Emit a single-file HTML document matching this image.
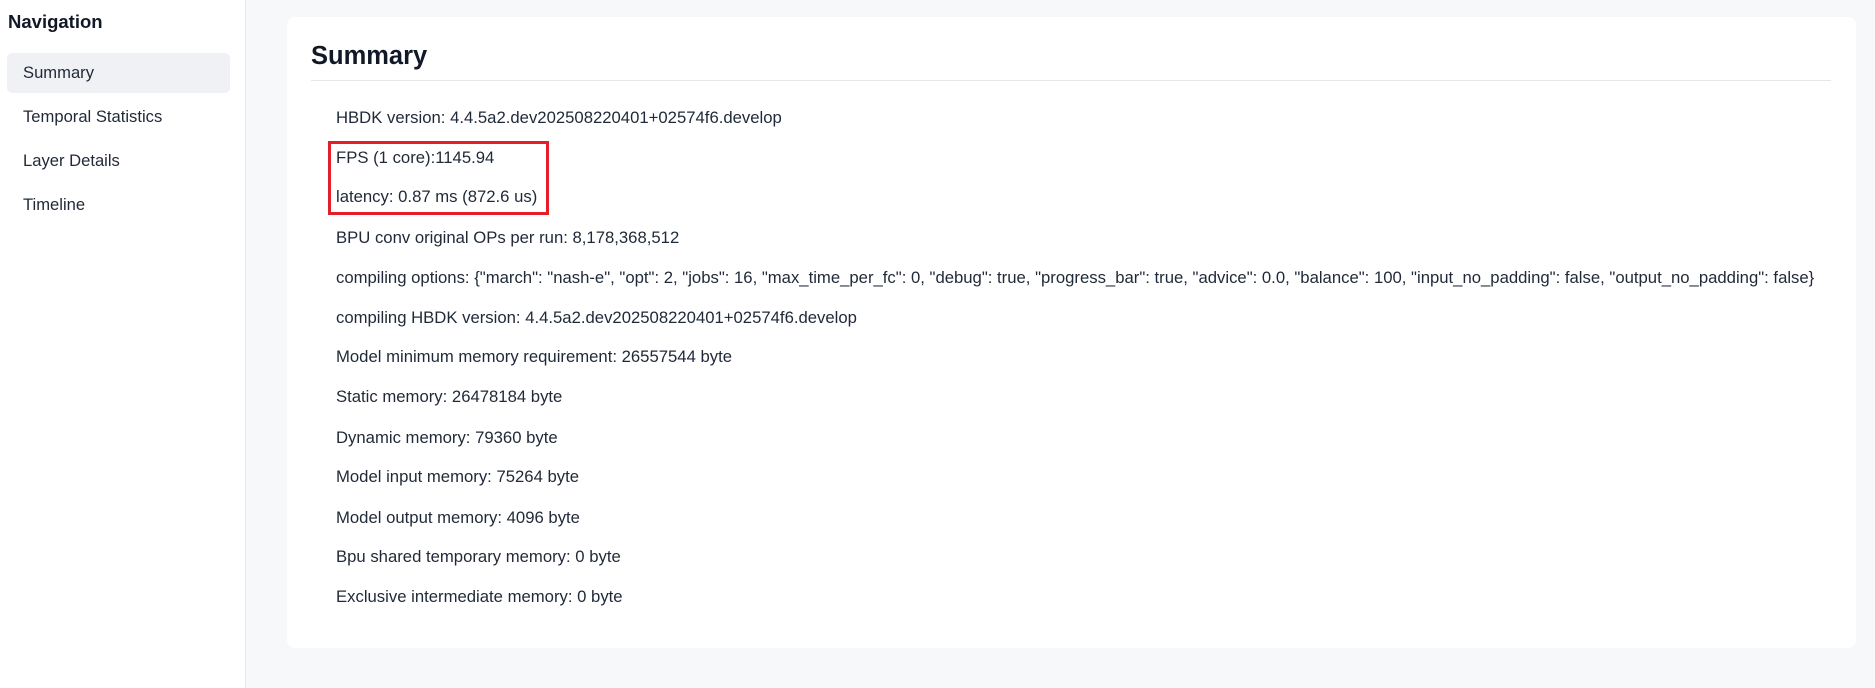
<!DOCTYPE html>
<html><head><meta charset="utf-8"><style>
*{margin:0;padding:0;box-sizing:border-box}
body{width:1875px;height:688px;background:#f7f8fa;font-family:"Liberation Sans",sans-serif;color:#1f2937;position:relative;overflow:hidden}
.side{position:absolute;left:0;top:0;width:246px;height:688px;background:#fff;border-right:1px solid #e5e7eb}
.side h3{position:absolute;left:8px;top:11px;font-size:18.5px;font-weight:bold;color:#111827}
.item{position:absolute;left:7px;width:223px;height:40px;line-height:40px;padding-left:16px;font-size:16.6px;color:#1f2937;border-radius:5px}
.item.act{background:#f0f1f4}
.card{position:absolute;left:287px;top:17px;width:1569px;height:631px;background:#fff;border-radius:8px}
.card h1{position:absolute;left:24px;top:25px;font-size:25.5px;font-weight:bold;color:#111827}
.hr{position:absolute;left:24px;top:63px;width:1520px;height:1px;background:#e5e7eb}
.ln{position:absolute;left:49px;font-size:16.7px;color:#1f2937;white-space:nowrap}
.box{position:absolute;left:41px;top:124px;width:221px;height:74px;border:3px solid #e3202a}
</style></head><body>
<div class="side"><h3>Navigation</h3>
<div class="item act" style="top:53px">Summary</div>
<div class="item" style="top:97px">Temporal Statistics</div>
<div class="item" style="top:141px">Layer Details</div>
<div class="item" style="top:185px">Timeline</div>
</div>
<div class="card"><h1>Summary</h1><div class="hr"></div>
<div class="ln" style="top:91px">HBDK version: 4.4.5a2.dev202508220401+02574f6.develop</div>
<div class="ln" style="top:131px">FPS (1 core):1145.94</div>
<div class="ln" style="top:170px">latency: 0.87 ms (872.6 us)</div>
<div class="ln" style="top:211px">BPU conv original OPs per run: 8,178,368,512</div>
<div class="ln" style="top:251px">compiling options: {"march": "nash-e", "opt": 2, "jobs": 16, "max_time_per_fc": 0, "debug": true, "progress_bar": true, "advice": 0.0, "balance": 100, "input_no_padding": false, "output_no_padding": false}</div>
<div class="ln" style="top:291px">compiling HBDK version: 4.4.5a2.dev202508220401+02574f6.develop</div>
<div class="ln" style="top:330px">Model minimum memory requirement: 26557544 byte</div>
<div class="ln" style="top:370px">Static memory: 26478184 byte</div>
<div class="ln" style="top:411px">Dynamic memory: 79360 byte</div>
<div class="ln" style="top:450px">Model input memory: 75264 byte</div>
<div class="ln" style="top:491px">Model output memory: 4096 byte</div>
<div class="ln" style="top:530px">Bpu shared temporary memory: 0 byte</div>
<div class="ln" style="top:570px">Exclusive intermediate memory: 0 byte</div>
<div class="box"></div>
</div>
</body></html>
